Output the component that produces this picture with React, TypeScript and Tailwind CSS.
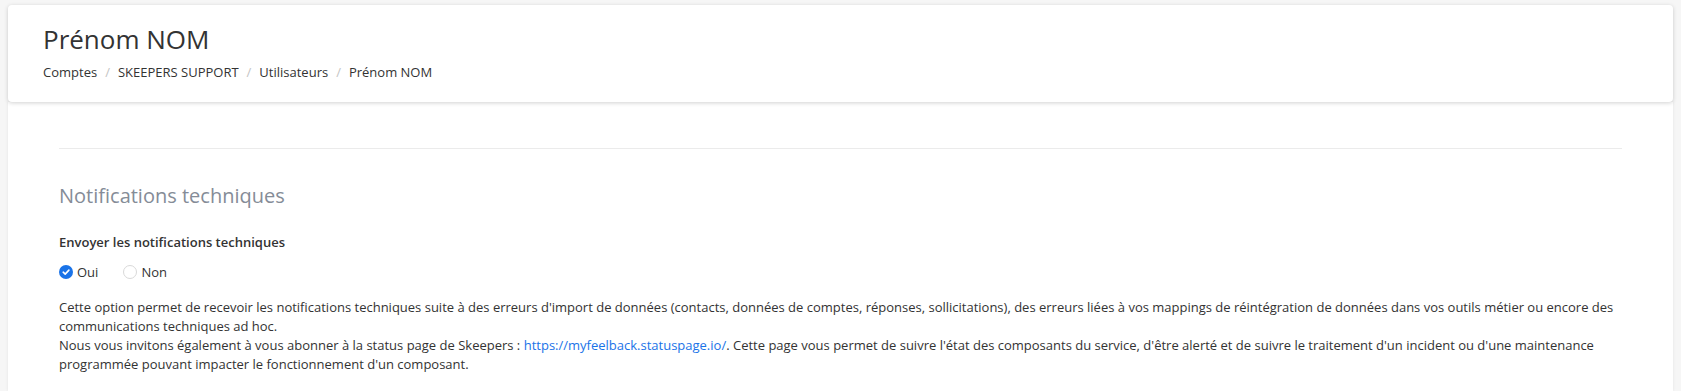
import React from 'react';

const crumbs = ['Comptes', 'SKEEPERS SUPPORT', 'Utilisateurs', 'Prénom NOM'];

export default function App() {
  return (
    <div
      className="min-h-[391px] bg-[#f6f6f6] px-[8px] pt-[5px] text-[#333] text-[13px]"
      style={{ fontFamily: '"Open Sans", "Liberation Sans", sans-serif' }}
    >
      <div className="relative z-10 bg-white rounded-[4px] shadow-[0_1px_4px_rgba(0,0,0,0.18)] h-[97px] px-[35px] pt-[17px]">
        <h1 className="text-[26px] leading-[34px] text-[#333]">Prénom NOM</h1>
        <nav className="flex items-center mt-[7px] text-[13px] leading-[18px]">
          {crumbs.map((c, i) => (
            <span key={c} className="flex items-center">
              {i > 0 && <span className="text-[#c4c4c4] px-[8px]">/</span>}
              <span>{c}</span>
            </span>
          ))}
        </nav>
      </div>

      <div className="bg-white shadow-[0_0_3px_rgba(0,0,0,0.08)] min-h-[289px] px-[51px] pt-[46px]">
        <div className="border-t border-[#ebebeb]" />
        <h2 className="text-[20px] leading-[28px] text-[#858c97] mt-[33px]">Notifications techniques</h2>
        <div className="font-semibold text-[13px] leading-[18px] mt-[23px]">Envoyer les notifications techniques</div>
        <div className="flex items-center mt-[12px] text-[13px] leading-[18px]">
          <label className="flex items-center mr-[25px]">
            <span className="w-[14px] h-[14px] rounded-full bg-[#1a73e8] flex items-center justify-center mr-[4px]">
              <svg width="10" height="10" viewBox="0 0 10 10" fill="none">
                <path d="M2.2 5.2 L4.2 7.1 L7.9 3.1" stroke="white" strokeWidth="1.6" strokeLinecap="round" strokeLinejoin="round" />
              </svg>
            </span>
            Oui
          </label>
          <label className="flex items-center">
            <span className="w-[14px] h-[14px] rounded-full border border-[#d9d9d9] bg-white mr-[4px]" />
            Non
          </label>
        </div>
        <p className="mt-[17px] text-[13px] leading-[19px] pr-[8px]">
          Cette option permet de recevoir les notifications techniques suite à des erreurs d'import de données (contacts, données de comptes, réponses, sollicitations), des erreurs liées à vos mappings de réintégration de données dans vos outils métier ou encore des communications techniques ad hoc.
          <br />
          Nous vous invitons également à vous abonner à la status page de Skeepers :{' '}
          <a className="text-[#1a73e8]" href="#">https://myfeelback.statuspage.io/</a>. Cette page vous permet de suivre l'état des composants du service, d'être alerté et de suivre le traitement d'un incident ou d'une maintenance programmée pouvant impacter le fonctionnement d'un composant.
        </p>
      </div>
    </div>
  );
}
